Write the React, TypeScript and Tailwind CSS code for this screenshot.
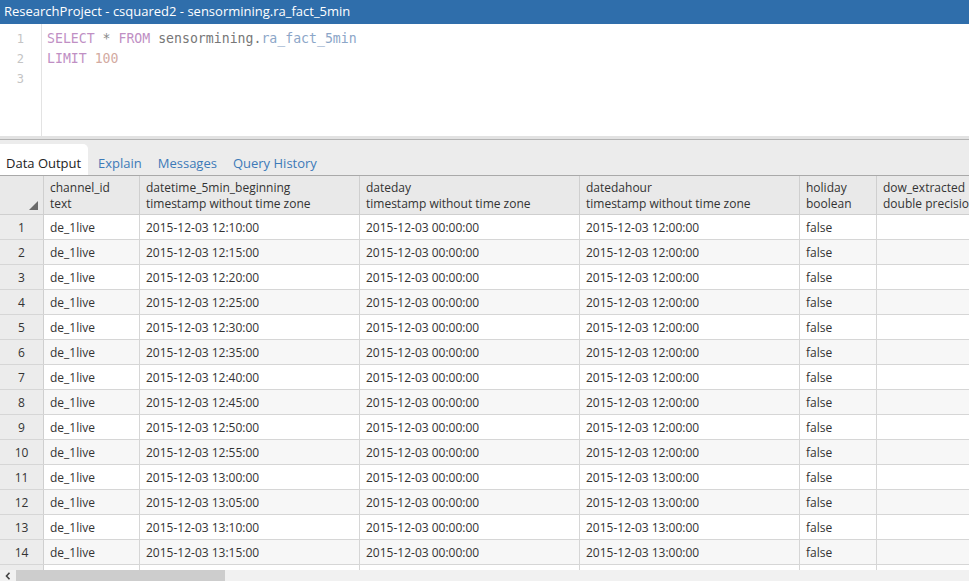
import React from 'react';

const cols = [
  { name: 'channel_id', type: 'text', w: 'w-[96px]' },
  { name: 'datetime_5min_beginning', type: 'timestamp without time zone', w: 'w-[220px]' },
  { name: 'dateday', type: 'timestamp without time zone', w: 'w-[220px]' },
  { name: 'datedahour', type: 'timestamp without time zone', w: 'w-[220px]' },
  { name: 'holiday', type: 'boolean', w: 'w-[77px]' },
  { name: 'dow_extracted', type: 'double precision', w: 'w-[120px]' },
];

const times = ['12:10', '12:15', '12:20', '12:25', '12:30', '12:35', '12:40', '12:45', '12:50', '12:55', '13:00', '13:05', '13:10', '13:15'];

const rows = times.map((t) => [
  'de_1live',
  `2015-12-03 ${t}:00`,
  '2015-12-03 00:00:00',
  `2015-12-03 ${t.startsWith('12') ? '12' : '13'}:00:00`,
  'false',
  '',
]);

export default function App() {
  return (
    <div className="w-[969px] h-[581px] overflow-hidden bg-white flex flex-col text-[#333]" style={{ fontFamily: '"Open Sans", sans-serif' }}>
      {/* title bar */}
      <div className="h-[24px] shrink-0 bg-[#2f6eab] text-white text-[13px] pl-[4px] flex items-center">
        ResearchProject - csquared2 - sensormining.ra_fact_5min
      </div>

      {/* sql editor */}
      <div className="h-[112px] shrink-0 flex">
        <div className="w-[42px] border-r border-[#e3e3e3] pt-[5px] pr-[17px] text-right text-[12px] leading-[20px] text-[#c4c4c4]" style={{ fontFamily: '"DejaVu Sans Mono", monospace' }}>
          <div>1</div>
          <div>2</div>
          <div>3</div>
        </div>
        <div className="pl-[5px] pt-[5px] text-[13.2px] leading-[20px]" style={{ fontFamily: '"DejaVu Sans Mono", monospace' }}>
          <div>
            <span className="text-[#c08fc4]">SELECT</span>
            <span className="text-[#888]"> * </span>
            <span className="text-[#c08fc4]">FROM</span>
            <span className="text-[#777]"> sensormining.</span>
            <span className="text-[#8ca6c8]">ra_fact_5min</span>
          </div>
          <div>
            <span className="text-[#c08fc4]">LIMIT</span>
            <span className="text-[#d3aaa0]"> 100</span>
          </div>
        </div>
      </div>

      {/* splitter */}
      <div className="h-[4px] shrink-0 bg-[#e2e2e2] border-b border-[#b3b3b3]" />

      {/* tabs */}
      <div className="h-[35px] shrink-0 bg-[#ececec] flex items-end text-[13px]">
        <div className="h-[31px] w-[88px] bg-white rounded-tr-[5px] pl-[6px] flex items-center pt-[8px] text-[#222]">Data Output</div>
        <div className="h-[31px] flex items-center pt-[8px] pl-[10px] text-[#3d7ab8]">Explain</div>
        <div className="h-[31px] flex items-center pt-[8px] pl-[16px] text-[#3d7ab8]">Messages</div>
        <div className="h-[31px] flex items-center pt-[8px] pl-[16px] text-[#3d7ab8]">Query History</div>
      </div>

      {/* grid */}
      <div className="flex-1 min-h-0 flex flex-col border-t border-[#a9a9a9] text-[12px]">
        <div className="h-[39px] shrink-0 flex bg-[#e9e9e9] border-b border-[#cfcfcf]">
          <div className="w-[44px] shrink-0 border-r border-[#cfcfcf] relative">
            <div className="absolute right-[5px] bottom-[4px] w-0 h-0 border-l-[9px] border-l-transparent border-b-[9px] border-b-[#6a6a6a]" />
          </div>
          {cols.map((c) => (
            <div key={c.name} className={`${c.w} shrink-0 border-r border-[#cfcfcf] pl-[6px] pt-[4px] leading-[16px] whitespace-nowrap overflow-hidden`}>
              <div>{c.name}</div>
              <div>{c.type}</div>
            </div>
          ))}
        </div>
        {rows.map((r, i) => (
          <div key={i} className={`h-[25px] shrink-0 flex border-b border-[#d6d6d6] ${i % 2 ? 'bg-[#f7f7f7]' : 'bg-white'}`}>
            <div className="w-[44px] shrink-0 bg-[#ececec] border-r border-[#cfcfcf] flex items-center justify-center pt-[2px]">{i + 1}</div>
            {cols.map((c, j) => (
              <div key={c.name} className={`${c.w} shrink-0 border-r border-[#d6d6d6] pl-[6px] pt-[2px] flex items-center whitespace-nowrap overflow-hidden`}>
                {r[j]}
              </div>
            ))}
          </div>
        ))}
        <div className="h-[5px] shrink-0 flex">
          <div className="w-[44px] shrink-0 bg-[#ececec] border-r border-[#cfcfcf]" />
          {cols.map((c) => (
            <div key={c.name} className={`${c.w} shrink-0 border-r border-[#d6d6d6]`} />
          ))}
        </div>
        {/* horizontal scrollbar */}
        <div className="h-[11px] shrink-0 bg-[#f1f1f1] flex items-center">
          <div className="w-[16px] h-[11px] flex items-center justify-center">
            <svg width="6" height="8" viewBox="0 0 6 8">
              <path d="M4.5 0.8 L1.5 4 L4.5 7.2" fill="none" stroke="#444" strokeWidth="1.6" />
            </svg>
          </div>
          <div className="w-[209px] h-[11px] bg-[#cdcdcd]" />
        </div>
      </div>
    </div>
  );
}
